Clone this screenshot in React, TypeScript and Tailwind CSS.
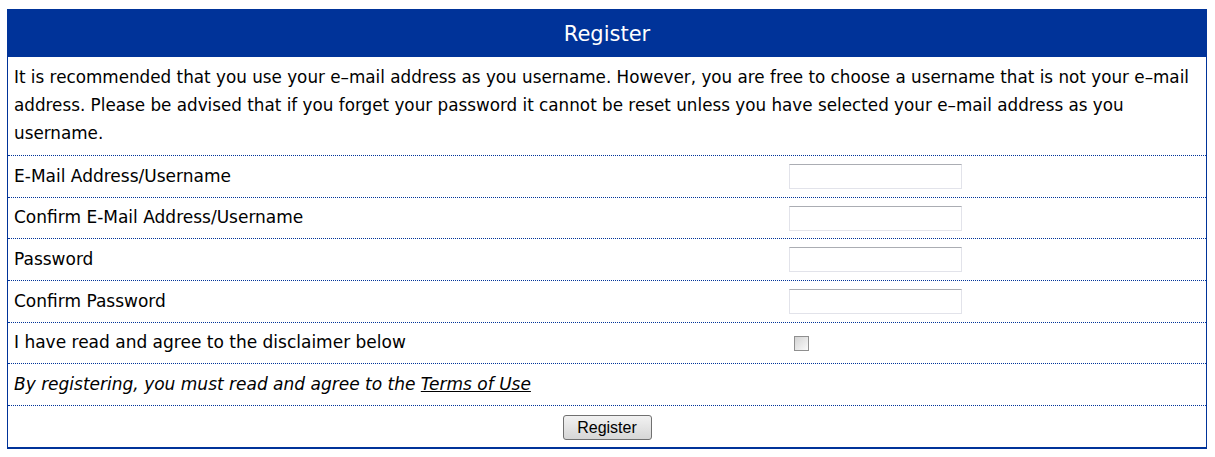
const rows = [
  'E-Mail Address/Username',
  'Confirm E-Mail Address/Username',
  'Password',
  'Confirm Password',
]

const dotted = 'border-t border-dotted border-[#003399]'

// en dash + word joiner so "e–mail" never breaks across lines
const email = 'e–\u2060mail'

export default function App() {
  return (
    <div className="min-h-screen bg-white pt-[9px] px-[7px] font-['DejaVu_Sans',sans-serif] text-[17px] text-black">
      <div className="w-[1200px] border-x border-b-2 border-[#003399]">
        <div className="h-[48px] pt-[3px] bg-[#003399] flex items-center justify-center text-white text-[21px]">
          Register
        </div>
        <p className="px-[6px] pt-[6px] pb-[8px] leading-[28px] text-[16.8px]">
          {`It is recommended that you use your ${email} address as you username. However, you are free to choose a username that is not your ${email} address. Please be advised that if you forget your password it cannot be reset unless you have selected your ${email} address as you username.`}
        </p>
        {rows.map((label) => (
          <div key={label} className={`${dotted} h-[41.7px] grid grid-cols-[781px_1fr] items-center`}>
            <div className="px-[6px]">{label}</div>
            <div>
              <input
                type={label.includes('Password') ? 'password' : 'text'}
                className="w-[173px] h-[25px] border border-[#e2e3ea] border-t-[#abadb3] bg-white outline-none"
              />
            </div>
          </div>
        ))}
        <div className={`${dotted} h-[41.7px] grid grid-cols-[781px_1fr] items-center`}>
          <div className="px-[6px]">I have read and agree to the disclaimer below</div>
          <div className="pl-[5px] flex items-center">
            <span className="w-[15px] h-[15px] border border-[#8f8f8f] bg-gradient-to-br from-[#d4d4d4] to-[#fafafa] block" />
          </div>
        </div>
        <div className={`${dotted} h-[41.7px] flex items-center px-[6px] italic`}>
          By registering, you must read and agree to the&nbsp;<a className="underline">Terms of Use</a>
        </div>
        <div className={`${dotted} h-[41.7px] pt-[2px] flex items-center justify-center`}>
          <button className="w-[89px] h-[25px] rounded-[3px] border border-[#707070] bg-gradient-to-b from-[#f2f2f2] to-[#d6d6d6] font-['Liberation_Sans',sans-serif] text-[16px] text-black">
            Register
          </button>
        </div>
      </div>
    </div>
  )
}
